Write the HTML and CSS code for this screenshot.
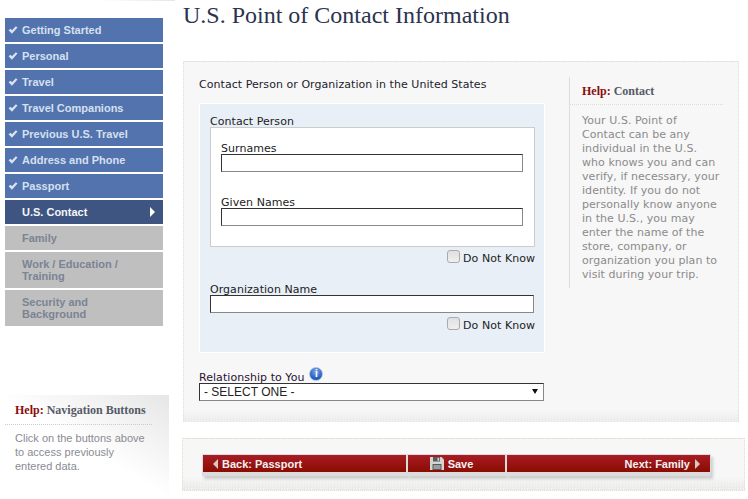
FILE: index.html
```html
<!DOCTYPE html>
<html lang="en">
<head>
  <meta charset="UTF-8" />
  <meta name="viewport" content="width=device-width, initial-scale=1.0"/>
  <title>U.S. Point of Contact Information</title>
  <link rel="stylesheet" href="styles.css">
</head>
<body>
  <div class="container">
    <div class="sidebar">
      <div class="top-strip"></div>
      <div class="menu">
        <a class="done"><svg class="check" viewBox="0 0 12 10"><path d="M0.4 5.2 L3 3.4 L4.7 5.4 L9.6 0.4 L11.6 2 L4.7 9.6 Z"/></svg>Getting Started</a>
        <a class="done"><svg class="check" viewBox="0 0 12 10"><path d="M0.4 5.2 L3 3.4 L4.7 5.4 L9.6 0.4 L11.6 2 L4.7 9.6 Z"/></svg>Personal</a>
        <a class="done"><svg class="check" viewBox="0 0 12 10"><path d="M0.4 5.2 L3 3.4 L4.7 5.4 L9.6 0.4 L11.6 2 L4.7 9.6 Z"/></svg>Travel</a>
        <a class="done"><svg class="check" viewBox="0 0 12 10"><path d="M0.4 5.2 L3 3.4 L4.7 5.4 L9.6 0.4 L11.6 2 L4.7 9.6 Z"/></svg>Travel Companions</a>
        <a class="done"><svg class="check" viewBox="0 0 12 10"><path d="M0.4 5.2 L3 3.4 L4.7 5.4 L9.6 0.4 L11.6 2 L4.7 9.6 Z"/></svg>Previous U.S. Travel</a>
        <a class="done"><svg class="check" viewBox="0 0 12 10"><path d="M0.4 5.2 L3 3.4 L4.7 5.4 L9.6 0.4 L11.6 2 L4.7 9.6 Z"/></svg>Address and Phone</a>
        <a class="done"><svg class="check" viewBox="0 0 12 10"><path d="M0.4 5.2 L3 3.4 L4.7 5.4 L9.6 0.4 L11.6 2 L4.7 9.6 Z"/></svg>Passport</a>
        <a class="active">U.S. Contact<span class="active-arrow"></span></a>
        <a class="locked">Family</a>
        <a class="locked">Work / Education / Training</a>
        <a class="locked">Security and Background</a>
      </div>
      <div class="nav-help">
        <h3><span class="help-word">Help:</span> Navigation Buttons</h3>
        <p>Click on the buttons above to access previously entered data.</p>
      </div>
    </div>

    <div class="main">
      <h1>U.S. Point of Contact Information</h1>

      <div class="panel">
        <div class="form-col">
          <div class="form-title">Contact Person or Organization in the United States</div>

          <div class="blue-box">
            <label class="box-label">Contact Person</label>
            <div class="white-box">
              <label for="surnames">Surnames</label>
              <input type="text" id="surnames">
              <label for="givenNames" class="second-label">Given Names</label>
              <input type="text" id="givenNames">
            </div>
            <div class="dnk">
              <input type="checkbox" id="dnkPerson">
              <label for="dnkPerson">Do Not Know</label>
            </div>

            <label for="orgName" class="org-label">Organization Name</label>
            <input type="text" id="orgName">
            <div class="dnk dnk-org">
              <input type="checkbox" id="dnkOrg">
              <label for="dnkOrg">Do Not Know</label>
            </div>
          </div>

          <div class="relationship">
            <label for="relationship">Relationship to You</label>
            <span class="info-icon">i</span>
          </div>
          <div class="select-wrap">
            <select id="relationship">
              <option>- SELECT ONE -</option>
            </select>
          </div>
        </div>

        <div class="help-col">
          <h3><span class="help-word">Help:</span> Contact</h3>
          <p>Your U.S. Point of Contact can be any individual in the U.S. who knows you and can verify, if necessary, your identity. If you do not personally know anyone in the U.S., you may enter the name of the store, company, or organization you plan to visit during your trip.</p>
        </div>
      </div>

      <div class="footer-panel">
        <div class="button-bar">
          <a class="btn btn-back"><span class="arrow-left"></span>Back: Passport</a>
          <a class="btn btn-save">
            <svg class="save-icon" viewBox="0 0 14 13">
              <path fill="#d4d4d4" d="M0 0 H11.5 L14 2.5 V13 H0 Z"/>
              <path fill="#5a5a5a" d="M3 0 H10 V4.5 H3 Z M2.5 7 H11.5 V13 H2.5 Z"/>
              <path fill="#d4d4d4" d="M7.5 0.8 H9.2 V3.8 H7.5 Z"/>
              <path fill="#ddd" d="M3.5 8.5 H10.5 V9.5 H3.5 Z M3.5 10.5 H10.5 V11.5 H3.5 Z"/>
            </svg>
            Save
          </a>
          <a class="btn btn-next">Next: Family<span class="arrow-right"></span></a>
        </div>
      </div>
    </div>
  </div>
</body>
</html>
```

FILE: styles.css
```css
html, body {
  height: 100%;
}

body {
  margin: 0;
  font-family: "DejaVu Sans", Verdana, sans-serif;
  font-size: 11px;
  letter-spacing: 0.05px;
  background-color: #fff;
  color: #222;
  overflow: hidden;
}

.container {
  display: flex;
  height: 499px;
}

/* left side */
.sidebar {
  width: 182px;
  flex-shrink: 0;
  display: flex;
  flex-direction: column;
  letter-spacing: 0;
}

.top-strip {
  width: 75px;
  height: 1px;
  margin: 0 0 17px 100px;
  background: linear-gradient(to right, #fff, #e6e6e6);
}

.menu {
  width: 158px;
  margin-left: 5px;
  display: flex;
  flex-direction: column;
  gap: 2px;
}

.menu a {
  position: relative;
  display: flex;
  align-items: center;
  min-height: 24px;
  padding: 0 24px 0 17px;
  box-sizing: border-box;
  font-family: "Liberation Sans", Arial, sans-serif;
  font-size: 11px;
  font-weight: bold;
  line-height: 12px;
}

.menu a.done {
  background-color: #5273ad;
  color: #d5e0f0;
}

.menu a.active {
  background-color: #3e5581;
  color: #f4f6fa;
}

.menu a.locked {
  background-color: #bfbfbf;
  color: #7b8493;
  padding-top: 6px;
  padding-bottom: 6px;
}

.check {
  position: absolute;
  left: 3px;
  top: 8px;
  width: 10px;
  height: 8px;
  fill: #dbe4f2;
}

.active-arrow {
  position: absolute;
  right: 8px;
  top: 7px;
  border-left: 5px solid #fff;
  border-top: 5px solid transparent;
  border-bottom: 5px solid transparent;
}

.nav-help {
  width: 169px;
  height: 104px;
  margin-top: 69px;
  padding-top: 8px;
  box-sizing: border-box;
  background: linear-gradient(to top right, #fff 50%, #e6e6e6 100%);
}

.nav-help h3,
.help-col h3 {
  margin: 0;
  font-family: "Liberation Serif", "Times New Roman", serif;
  font-size: 12px;
  font-weight: bold;
  letter-spacing: 0;
  color: #555a66;
}

.help-word {
  color: #8a0c0c;
}

.nav-help h3 {
  margin-left: 5px;
  padding: 0 0 7px 10px;
  width: 137px;
  line-height: 14px;
  border-bottom: 1px dotted #ccc;
}

.nav-help p {
  margin: 6px 20px 0 15px;
  font-family: "Liberation Sans", Arial, sans-serif;
  font-size: 11px;
  line-height: 14px;
  color: #8a8b94;
}

/* main side */
.main {
  width: 566px;
}

h1 {
  margin: 0;
  padding-left: 1px;
  height: 61px;
  box-sizing: border-box;
  font-family: "Liberation Serif", "Times New Roman", serif;
  font-size: 24px;
  font-weight: normal;
  letter-spacing: 0;
  line-height: 30px;
  color: #2b3350;
}

.panel {
  display: flex;
  width: 556px;
  height: 361px;
  margin-left: 1px;
  box-sizing: border-box;
  border: 1px dotted #ddd;
  border-bottom: none;
  background:
    linear-gradient(#f7f7f7 348px, rgba(247, 247, 247, 0) 361px),
    repeating-conic-gradient(#e6e6e6 0 25%, #f0f0f0 0 50%) 0 0 / 3px 3px;
}

.form-col {
  width: 346px;
  margin-left: 15px;
  flex-shrink: 0;
}

.form-title {
  margin-top: 16px;
  line-height: 14px;
  color: #1c1c2c;
}

.blue-box {
  width: 346px;
  height: 250px;
  margin-top: 11px;
  padding: 11px 10px 0;
  box-sizing: border-box;
  background-color: #e8eff6;
  border: 1px solid #fff;
}

label {
  display: block;
  height: 12px;
  line-height: 14px;
  color: #1c1c1c;
}

input[type="text"] {
  display: block;
  box-sizing: border-box;
  height: 18px;
  padding: 0 3px;
  background-color: #fff;
  border: 1px solid #888;
  border-top-color: #333;
  border-left-color: #333;
  outline: none;
}

.white-box {
  width: 325px;
  height: 120px;
  padding: 14px 10px 0;
  box-sizing: border-box;
  background-color: #fff;
  border: 1px solid #ccc;
}

.white-box input[type="text"] {
  width: 302px;
}

.second-label {
  margin-top: 24px;
}

.dnk {
  display: flex;
  justify-content: flex-end;
  align-items: center;
  width: 325px;
  height: 20px;
  margin-top: 1px;
}

.dnk-org {
  margin-top: 2px;
}

.dnk label {
  height: auto;
  line-height: 14px;
  margin-top: 2px;
}

.dnk input {
  appearance: none;
  width: 13px;
  height: 13px;
  margin: 0 3px 4px 0;
  background: linear-gradient(#e0e0e0, #efefef);
  border: 1px solid #aaa;
  border-radius: 3px;
}

.org-label {
  margin-top: 15px;
}

#orgName {
  width: 324px;
}

.relationship {
  display: flex;
  align-items: flex-end;
  height: 16px;
  margin-top: 14px;
}

.relationship label {
  color: #2a1030;
}

.info-icon {
  width: 12px;
  height: 12px;
  margin: 0 0 2px 5px;
  border-radius: 50%;
  border: 1px solid #a9c4ea;
  background: radial-gradient(circle at 50% 30%, #7aa8e8, #1f55b4 75%);
  color: #fff;
  font-family: "Liberation Sans", Arial, sans-serif;
  font-size: 10px;
  font-weight: bold;
  line-height: 12px;
  text-align: center;
}

.select-wrap {
  position: relative;
  width: 345px;
}

.select-wrap::after {
  content: "";
  position: absolute;
  right: 6px;
  top: 6px;
  border-top: 5px solid #111;
  border-left: 3px solid transparent;
  border-right: 3px solid transparent;
  pointer-events: none;
}

select {
  appearance: none;
  display: block;
  width: 100%;
  height: 18px;
  padding: 0 4px;
  box-sizing: border-box;
  font-family: "Liberation Sans", Arial, sans-serif;
  font-size: 12px;
  color: #222;
  background-color: #fff;
  border: 1px solid #888;
  border-top-color: #333;
  border-left-color: #333;
  border-radius: 0;
}

.help-col {
  width: 154px;
  height: 211px;
  margin: 15px 0 0 24px;
  box-sizing: border-box;
  border-left: 1px solid #ddd;
}

.help-col h3 {
  padding: 7px 0 6px 12px;
  line-height: 14px;
  border-bottom: 1px dotted #ddd;
}

.help-col p {
  width: 141px;
  margin: 9px 0 0 12px;
  line-height: 14px;
  color: #8b8b8b;
}

.footer-panel {
  width: 563px;
  height: 53px;
  margin-top: 16px;
  padding: 15px 0 0 20px;
  box-sizing: border-box;
  border: 1px dotted #e6dcc8;
  background:
    linear-gradient(#f7f7f7 38px, rgba(247, 247, 247, 0) 51px),
    repeating-conic-gradient(#e6e6e6 0 25%, #f0f0f0 0 50%) 0 0 / 3px 3px;
}

.button-bar {
  display: flex;
  margin-left: -1px;
}

.btn {
  display: flex;
  align-items: center;
  box-sizing: border-box;
  height: 22px;
  border: 1px solid #dcdcdc;
  border-bottom-width: 4px;
  background: linear-gradient(#a81c26, #8a0c00);
  box-shadow: 2px 3px 3px #ccc;
  font-family: "Liberation Sans", Arial, sans-serif;
  font-size: 11px;
  font-weight: bold;
  letter-spacing: 0;
  color: #f6f0f4;
}

.btn-back {
  width: 205px;
  padding-left: 10px;
}

.btn-save {
  width: 99px;
  justify-content: center;
  gap: 4px;
  padding-right: 10px;
}

.btn-next {
  width: 205px;
  justify-content: flex-end;
  padding-right: 10px;
}

.save-icon {
  width: 14px;
  height: 13px;
}

.arrow-left {
  margin-right: 4px;
  border-right: 5px solid #d8c8c0;
  border-top: 5px solid transparent;
  border-bottom: 5px solid transparent;
}

.arrow-right {
  margin-left: 5px;
  border-left: 5px solid #d8c8c0;
  border-top: 5px solid transparent;
  border-bottom: 5px solid transparent;
}
```
